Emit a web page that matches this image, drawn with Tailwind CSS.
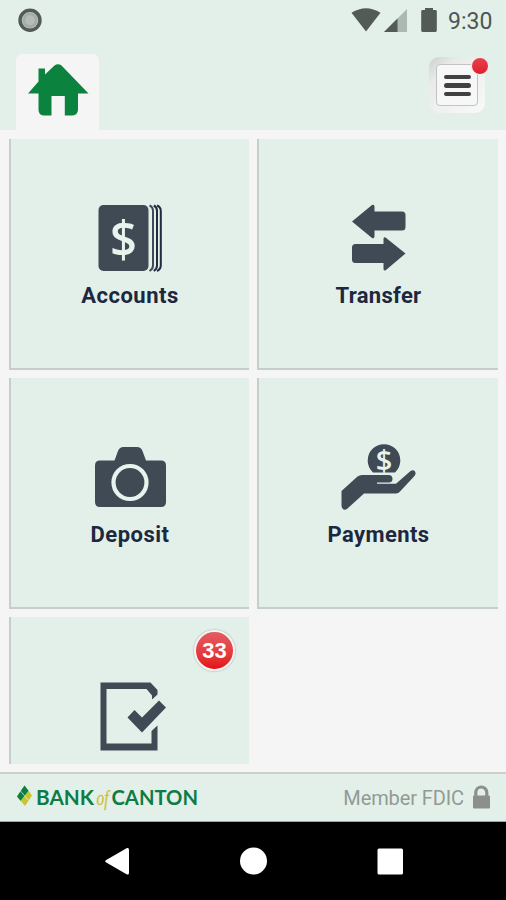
<!DOCTYPE html>
<html lang="en">
<head>
    <meta charset="UTF-8">
    <meta name="viewport" content="width=device-width, initial-scale=1.0">
    <title>Bank of Canton</title>
    <script src="https://cdn.jsdelivr.net/npm/@tailwindcss/browser@4"></script>
</head>
<body class="bg-[#f5f5f5] font-['Roboto',sans-serif] text-[#1c2840]">
    <div class="flex flex-col w-[506px] h-[900px] overflow-hidden">
        <!-- Status bar -->
        <div class="flex justify-between h-[42px] shrink-0 bg-[#e3f0e9]">
            <svg class="w-[60px] h-[42px]" viewBox="0 0 60 42">
                <circle cx="30" cy="20.3" r="10" fill="#bcc5c1" stroke="#535b57" stroke-width="3.4"/>
                <circle cx="30" cy="20.3" r="7.6" fill="#a5aca9"/>
                <circle cx="30" cy="20.3" r="5" fill="#b5bcb9"/>
            </svg>
            <div class="flex">
                <svg class="w-[98px] h-[42px]" viewBox="350 0 98 42">
                    <path d="M351.5 12.8Q366 3.8 380.5 12.8L366 31.5Z" fill="#535b57"/>
                    <path d="M407 9V32H384Z" fill="#acb8b2"/>
                    <path d="M397.5 18.5V32H384Z" fill="#535b57"/>
                    <path d="M425 8h8v2h2.5q1.3 0 1.3 1.3v19.2q0 1.4-1.3 1.4h-13q-1.3 0-1.3-1.4v-19.2q0-1.3 1.3-1.3h2.5z" fill="#535b57"/>
                </svg>
                <span class="w-[58px] pt-[8px] text-[23px] leading-[28px] text-[#4d5652]">9:30</span>
            </div>
        </div>

        <!-- Header -->
        <header class="flex justify-between h-[88px] shrink-0 bg-[#e3f0e9] pl-4 pr-[20px]">
            <div class="mt-[12px] w-[83px] h-[76px] rounded-t-md bg-[#f5f5f5]">
                <svg class="w-full h-full" viewBox="16 54 83 76">
                    <path d="M28 93.5L38.5 81.5V68.5H45V74.5L54.5 65.5Q58 62.8 61.5 65.5L88.5 93.5H78V110Q77.5 115 72.5 115.5H64.8V96H51.5V115.5H43.5Q38.8 115 38.5 110V93.5Z" fill="#0b833f"/>
                </svg>
            </div>
            <button class="relative mt-[15px] w-[57px] h-[56px]">
                <span class="flex items-center justify-center w-[56px] h-[56px] rounded-[10px] bg-linear-to-br from-[#cbd0ce] via-[#e8ebe9] via-25% to-[#f8faf9]">
                    <span class="flex flex-col items-center justify-center gap-[4px] w-[42px] h-[42px] pt-[1px] rounded-[4px] border border-[#c3c3c5] bg-[#f8f7f8]">
                        <span class="w-[27px] h-[4.5px] rounded-full bg-[#414141]"></span>
                        <span class="w-[27px] h-[4.5px] rounded-full bg-[#414141]"></span>
                        <span class="w-[27px] h-[4.5px] rounded-full bg-[#414141]"></span>
                    </span>
                </span>
                <span class="absolute top-0 left-[42px] w-[18px] h-[18px] rounded-full border border-[#f4eeee] bg-linear-to-b from-[#e4404c] to-[#e01d2b]"></span>
            </button>
        </header>

        <!-- Tiles -->
        <main class="h-[642px] shrink-0 overflow-hidden pt-[9px] pr-[8px] pl-[9px]">
            <div class="grid grid-cols-[240px_241px] grid-rows-[231px_231px_147px] gap-2">
                <a class="flex flex-col items-center pt-[63px] bg-[#e3f0e9] shadow-[inset_2px_-2px_0_#c5cecb]">
                    <svg class="w-[80px] h-[72px]" viewBox="89 202 80 72" fill="#3f4a54">
                        <rect x="98.5" y="205" width="50" height="66" rx="5"/>
                        <path d="M149.5 205.5Q153 207 153 211V265.5Q153 269 149.5 271" fill="none" stroke="#3f4a54" stroke-width="2"/>
                        <path d="M153.8 205.5Q157 207 157 211V265.5Q157 269 153.8 271" fill="none" stroke="#1f2b40" stroke-width="2"/>
                        <path d="M157 205.5Q160.800 207 160.800 211V265.5Q160.800 269 157 271" fill="none" stroke="#1f2b40" stroke-width="2"/>
                        <text x="123.5" y="256.5" text-anchor="middle" font-family="Open Sans" font-size="51" font-weight="600" fill="#e8f3ed" textLength="27" lengthAdjust="spacingAndGlyphs">$</text>
                    </svg>
                    <span class="mt-2 pl-[2px] text-[22px] leading-[28px] font-bold tracking-[0.5px]">Accounts</span>
                </a>
                <a class="flex flex-col items-center pt-[63px] bg-[#e3f0e9] shadow-[inset_2px_-2px_0_#c5cecb]">
                    <svg class="w-[80px] h-[72px]" viewBox="338 202 80 72" fill="#3f4a54">
                        <path d="M352 221.5L372 205Q374.5 204 374.5 207V211.5H402Q405.5 211.5 405.5 215V227Q405.5 230.5 402 230.5H374.5V236Q374.5 239 372 238Z"/>
                        <path d="M405.5 253.5L385.5 237.5Q383.5 236.5 383.5 239V244H355.5Q352 244 352 247.5V259.5Q352 263 355.5 263H383.5V268.5Q383.5 271.5 386 270Z"/>
                    </svg>
                    <span class="mt-2 pl-[2px] text-[22px] leading-[28px] font-bold tracking-[0.3px]">Transfer</span>
                </a>
                <a class="flex flex-col items-center pt-[63px] bg-[#e3f0e9] shadow-[inset_2px_-2px_0_#c5cecb]">
                    <svg class="w-[80px] h-[72px]" viewBox="89 441 80 72" fill="#3f4a54">
                        <path d="M100 460.5H114.5L118 451Q119.5 447 123.5 447H137Q141 447 142.5 451L146 460.5H161Q166 460.5 166 465.5V502Q166 507 161 507H100Q95 507 95 502V465.5Q95 460.5 100 460.5Z"/>
                        <circle cx="130" cy="482.5" r="16.5" fill="none" stroke="#e8f3ed" stroke-width="4.2"/>
                    </svg>
                    <span class="mt-2 pl-[2px] text-[22px] leading-[28px] font-bold tracking-[0.5px]">Deposit</span>
                </a>
                <a class="flex flex-col items-center pt-[63px] bg-[#e3f0e9] shadow-[inset_2px_-2px_0_#c5cecb]">
                    <svg class="w-[80px] h-[72px]" viewBox="338 441 80 72" fill="#3f4a54">
                        <path d="M373 472.5A16.3 16.3 0 1 1 395 472.5Z"/>
                        <text x="384" y="470.5" text-anchor="middle" font-family="Open Sans" font-size="29" font-weight="600" fill="#e8f3ed">$</text>
                        <path d="M341.5 491L357.5 476.5Q359.5 475 362 475H388.5Q392.5 475 392.5 479Q392.5 482 389.5 482.5H377V483.8H396L410.5 471Q413.5 469.5 415 471.5Q416.5 474 414 476.5L400 491.5Q398.5 493.5 396 493.5H364L347.5 508.5Q344.5 511 342.5 508.5Q341.5 507.5 341.5 505Z"/>
                    </svg>
                    <span class="mt-2 pl-[2px] text-[22px] leading-[28px] font-bold tracking-[0.4px]">Payments</span>
                </a>
                <a class="relative flex flex-col items-center pt-[63px] bg-[#e3f0e9] shadow-[inset_2px_0_0_#c5cecb]">
                    <svg class="w-[80px] h-[72px]" viewBox="89 680 80 72" fill="#3f4a54">
                        <path d="M100.5 682.5H150.5L157.5 690V694.5L152 699.5V695.5L146.5 689H106.5V743.5H151.5V731L157.5 725.5V750.5H100.5Z"/>
                        <path d="M127.5 717.5L134.5 710L142 717.5L159 700.5L166 707.5L142 732.5Z"/>
                    </svg>
                    <span class="absolute top-[13px] left-[185px] flex items-center justify-center w-[41px] h-[41px] rounded-full border-2 border-[#f4f4f4] bg-linear-to-b from-[#e35b62] to-[#e50a14] shadow-[0_0_2px_#8d9691] font-['Liberation_Sans'] text-[22px] font-bold text-white">33</span>
                </a>
            </div>
        </main>

        <!-- Footer -->
        <footer class="flex justify-between h-[50px] shrink-0 border-t-2 border-t-[#cdcfce] border-b border-b-[#9ca7a1] bg-[#e3f0e9] pl-[14px] pr-[12px]">
            <svg class="w-[190px] h-[48px] shrink-0" viewBox="14 774 190 48">
                <path d="M24.5 785.5L32 795.5L25 806L17 796.5Z" fill="#c9c532"/>
                <path d="M24.5 785.5L28.5 790.8L20.5 800.7L17 796.5Z" fill="#0d7c46"/>
                <path d="M20.5 791L28.5 800.5" stroke="#e3f0e9" stroke-width="0.7"/>
                <g font-family="Lato" font-size="20.5" font-weight="700" fill="#0d7c46">
                    <text x="36" y="805" textLength="58" lengthAdjust="spacingAndGlyphs">BANK</text>
                    <text x="111.5" y="805" textLength="86.5" lengthAdjust="spacingAndGlyphs">CANTON</text>
                </g>
                <text x="96.5" y="805" textLength="12" lengthAdjust="spacingAndGlyphs" font-family="Liberation Serif" font-size="21" font-style="italic" fill="#cdbf3a" stroke="#cdbf3a" stroke-width="0.3">of</text>
            </svg>
            <div class="flex">
                <span class="pt-[10px] pr-[6px] text-[20px] leading-[28px] tracking-[-0.1px] text-[#929a96]">Member FDIC</span>
                <svg class="w-[24px] h-[48px]" viewBox="470 774 24 48">
                    <path d="M475.8 797V792.5A5.5 5.5 0 0 1 486.8 792.5V797" fill="none" stroke="#8c8f8d" stroke-width="3.2"/>
                    <rect x="473" y="795.5" width="17" height="13" rx="1" fill="#8c8f8d"/>
                </svg>
            </div>
        </footer>

        <!-- Android navigation -->
        <nav class="h-[78px] shrink-0 bg-black">
            <svg class="w-full h-[78px]" viewBox="0 822 506 78" fill="#fff">
                <path d="M105.8 860.3L127 848Q129 847.5 129 849.5V873Q129 875 127 874.5L105.8 862.3Q104.5 861.3 105.8 860.3Z"/>
                <circle cx="253.5" cy="861" r="13.5"/>
                <rect x="377.5" y="848.5" width="25.5" height="26" rx="1.5"/>
            </svg>
        </nav>
    </div>
</body>
</html>
